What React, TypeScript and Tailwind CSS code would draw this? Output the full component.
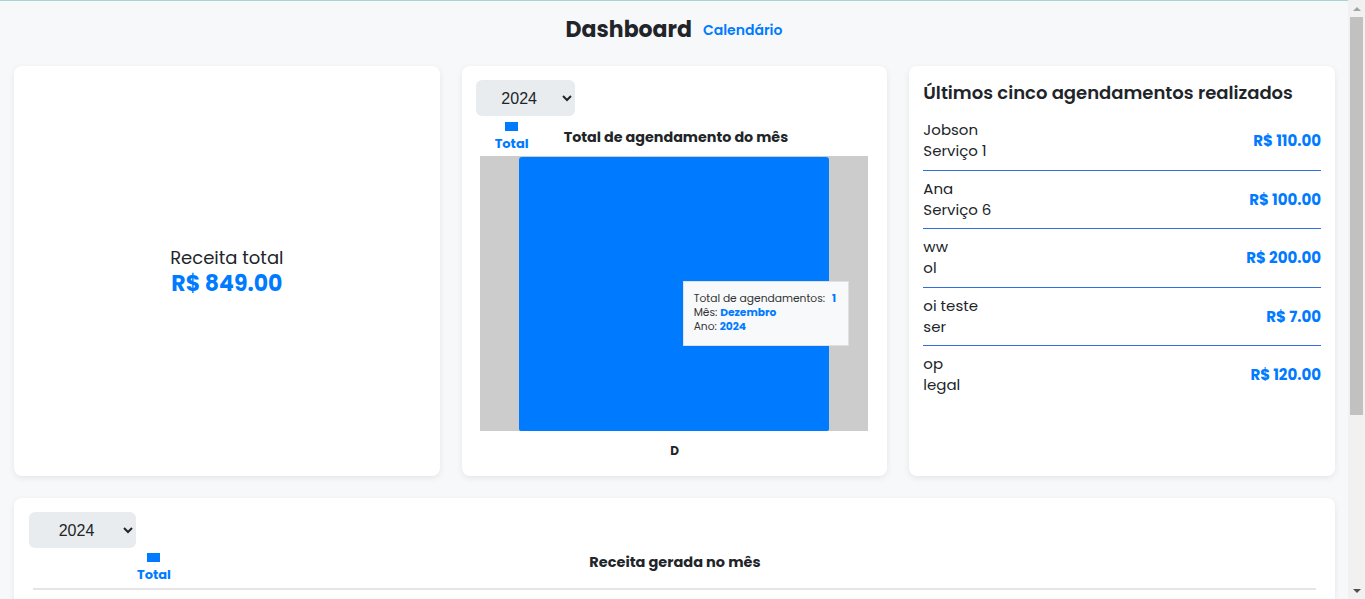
import React from "react"

// Last five bookings
const bookings = [
  { id: 1, name: "Jobson", service: "Serviço 1", price: "R$ 110.00" },
  { id: 2, name: "Ana", service: "Serviço 6", price: "R$ 100.00" },
  { id: 3, name: "ww", service: "ol", price: "R$ 200.00" },
  { id: 4, name: "oi teste", service: "ser", price: "R$ 7.00" },
  { id: 5, name: "op", service: "legal", price: "R$ 120.00" },
]

function YearSelect({ width }: { width: string }) {
  return (
    <select
      defaultValue="2024"
      className={`${width} h-[36px] rounded-[6px] bg-[#e9ecef] text-center text-[16px] text-[#212529] font-['Liberation_Sans',Arial,sans-serif] outline-none`}
    >
      <option value="2024">2024</option>
      <option value="2023">2023</option>
    </select>
  )
}

function Legend() {
  return (
    <div className="flex flex-col items-center">
      <div className="w-[13px] h-[9px] bg-[#007bff]" />
      <span className="mt-[5px] text-[13px] font-bold text-[#007bff] leading-[16px]">Total</span>
    </div>
  )
}

// Browser-like scrollbar seen on the right of the screenshot
function Scrollbar() {
  return (
    <div className="w-[17px] h-[599px] shrink-0 bg-[#f1f1f1] flex flex-col items-center">
      <div className="h-[17px] flex items-center justify-center">
        <div className="w-0 h-0 border-x-[4px] border-x-transparent border-b-[4px] border-b-[#a3a3a3]" />
      </div>
      <div className="w-[13px] h-[398px] bg-[#c1c1c1]" />
      <div className="flex-1" />
      <div className="h-[17px] flex items-center justify-center">
        <div className="w-0 h-0 border-x-[4px] border-x-transparent border-t-[4px] border-t-[#505050]" />
      </div>
    </div>
  )
}

export default function App() {
  return (
    <div className="h-[599px] overflow-hidden flex bg-[#f7f8fa] font-['Poppins','Open_Sans',sans-serif] text-[#212529]">
      <div className="flex-1 border-t border-[#a9d4d6]">
        {/* Header */}
        <div className="flex items-center justify-center gap-[11px] pt-[13px] h-[55px] pb-[10px]">
          <h1 className="text-[22px] font-bold leading-none">Dashboard</h1>
          <a href="#" className="text-[14px] font-semibold text-[#007bff] leading-none">
            Calendário
          </a>
        </div>

        <div className="pl-[14px] pr-[13px] pt-[10px]">
          <div className="grid grid-cols-3 gap-[22px]">
            {/* Total revenue */}
            <div className="h-[410px] bg-white rounded-[8px] shadow-[0_2px_6px_rgba(0,0,0,0.08)] flex flex-col items-center justify-center pt-[2px]">
              <span className="text-[18px] leading-[24px]">Receita total</span>
              <span className="text-[22px] font-bold text-[#007bff] leading-[28px]">R$ 849.00</span>
            </div>

            {/* Monthly bookings chart */}
            <div className="h-[410px] bg-white rounded-[8px] shadow-[0_2px_6px_rgba(0,0,0,0.08)] p-[14px] flex flex-col">
              <YearSelect width="w-[99px]" />
              <div className="flex mt-[6px] pl-[19px] h-[34px]">
                <Legend />
                <div className="flex-1 text-center text-[14.3px] font-bold pt-[5px] pr-[50px]">
                  Total de agendamento do mês
                </div>
              </div>
              <div className="relative ml-[4px] mr-[5px] h-[275px] bg-[#cccccc] px-[39px] pt-[1px]">
                <div className="h-full bg-[#007bff] rounded-t-[3px] rounded-b-[2px]" />
                <div className="absolute left-[203px] top-[125px] w-[166px] h-[65px] bg-[#f8f9fa] border border-[#e0e0e0] px-[10px] pt-[10px] text-[10.7px] leading-[14px] text-[#333]">
                  <div>
                    Total de agendamentos: <span className="ml-[4px] font-bold text-[#007bff]">1</span>
                  </div>
                  <div>
                    Mês: <span className="font-bold text-[#007bff]">Dezembro</span>
                  </div>
                  <div>
                    Ano: <span className="font-bold text-[#007bff]">2024</span>
                  </div>
                </div>
              </div>
              <div className="text-center text-[12px] font-bold mt-[11px]">D</div>
            </div>

            {/* Last five bookings */}
            <div className="h-[410px] bg-white rounded-[8px] shadow-[0_2px_6px_rgba(0,0,0,0.08)] px-[14px] pt-[13px]">
              <h2 className="text-[18px] font-semibold leading-[27px]">Últimos cinco agendamentos realizados</h2>
              <ul className="mt-[6px]">
                {bookings.map((b, i) => (
                  <li
                    key={b.id}
                    className={`flex items-center justify-between pt-[7px] pb-[8.5px] ${
                      i < bookings.length - 1 ? "border-b border-[#2f6fe0]" : ""
                    }`}
                  >
                    <div className="text-[15px] leading-[21px]">
                      <div>{b.name}</div>
                      <div>{b.service}</div>
                    </div>
                    <span className="pt-[3px] text-[15px] font-bold text-[#007bff]">{b.price}</span>
                  </li>
                ))}
              </ul>
            </div>
          </div>

          {/* Monthly revenue */}
          <div className="mt-[22px] bg-white rounded-[8px] shadow-[0_2px_6px_rgba(0,0,0,0.08)] px-[15px] pt-[14px] h-[300px]">
            <YearSelect width="w-[107px]" />
            <div className="flex mt-[5px] pl-[108px] h-[34px]">
              <Legend />
              <div className="flex-1 text-center text-[14.5px] font-bold leading-[16px] pt-[1px] pr-[141px]">
                Receita gerada no mês
              </div>
            </div>
            <div className="mx-[4px] mt-[1px] border-t-2 border-[#e5e5e5]" />
          </div>
        </div>
      </div>
      <Scrollbar />
    </div>
  )
}
